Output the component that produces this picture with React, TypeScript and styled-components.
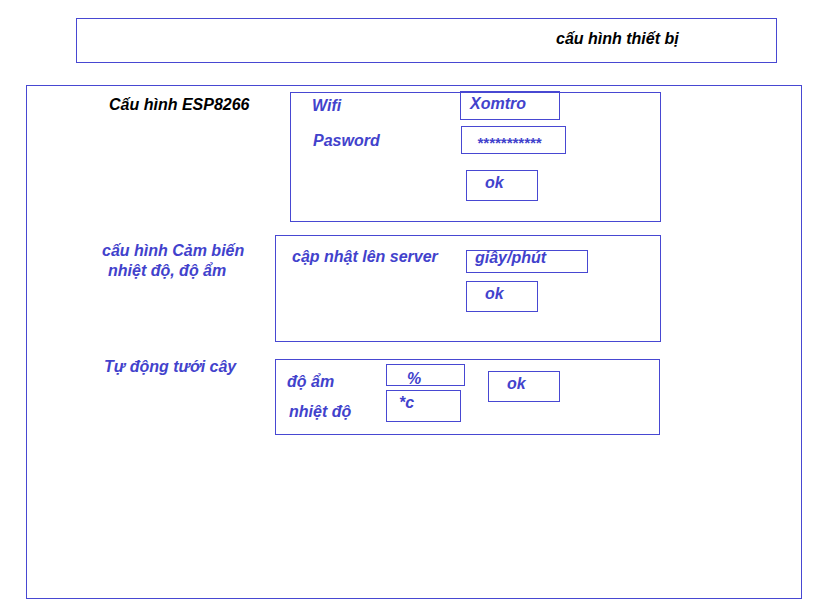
import React from 'react'
import styled, { createGlobalStyle } from 'styled-components'

const Blue = '#4242cc'
const Line = '#4848d2'

const GlobalStyle = createGlobalStyle`
  html, body {
    margin: 0;
    padding: 0;
    background: #ffffff;
  }
  body {
    font-family: "Liberation Sans", Arial, sans-serif;
    font-size: 16px;
    font-weight: bold;
    font-style: italic;
  }
`

export default function App() {
  return (
    <>
      <GlobalStyle />
      <Page>
        <Header>
          <HeaderTitle>cấu hình thiết bị</HeaderTitle>
        </Header>

        <Main>
          {/* ESP8266 */}
          <Section $mt={6}>
            <SectionLabel $w={263} $pl={82} $mt={4} $dark>
              Cấu hình ESP8266
            </SectionLabel>
            <Panel $w={371} $h={130}>
              <FieldRow $mt={-2}>
                <FieldLabel $w={169} $pl={21} $mt={6}>Wifi</FieldLabel>
                <InputBox $w={100} $h={29} $pl={9} $pt={5}>Xomtro</InputBox>
              </FieldRow>
              <FieldRow $mt={6}>
                <FieldLabel $w={170} $pl={22} $mt={6}>Pasword</FieldLabel>
                <InputBox $w={105} $h={28} $pl={15} $pt={9} $small>***********</InputBox>
              </FieldRow>
              <FieldRow $mt={16}>
                <FieldLabel $w={175} />
                <InputBox $w={72} $h={31} $pl={18} $pt={5}>ok</InputBox>
              </FieldRow>
            </Panel>
          </Section>

          {/* Cảm biến */}
          <Section $mt={13}>
            <SectionLabel $w={248} $pl={75} $mt={6} $lh={20}>
              cấu hình Cảm biến
              <Indent>nhiệt độ, độ ẩm</Indent>
            </SectionLabel>
            <Panel $w={386} $h={107}>
              <FieldRow $mt={14}>
                <FieldLabel $w={190} $pl={16} $mt={-2}>cập nhật lên server</FieldLabel>
                <InputBox $w={122} $h={23} $pl={8} $pt={0}>giây/phút</InputBox>
              </FieldRow>
              <FieldRow $mt={8}>
                <FieldLabel $w={190} />
                <InputBox $w={72} $h={31} $pl={18} $pt={5}>ok</InputBox>
              </FieldRow>
            </Panel>
          </Section>

          {/* Tưới cây */}
          <Section $mt={17}>
            <SectionLabel $w={248} $pl={77} $mt={-1}>
              Tự động tưới cây
            </SectionLabel>
            <Panel $w={385} $h={76} $row>
              <FieldColumn>
                <FieldRow $mt={4} $h={22}>
                  <FieldLabel $w={110} $pl={11} $mt={9}>độ ẩm</FieldLabel>
                  <InputBox $w={79} $h={22} $pl={20} $pt={7}>%</InputBox>
                </FieldRow>
                <FieldRow $mt={4} $h={32}>
                  <FieldLabel $w={110} $pl={13} $mt={13}>nhiệt độ</FieldLabel>
                  <InputBox $w={75} $h={32} $pl={12} $pt={5}>*c</InputBox>
                </FieldRow>
              </FieldColumn>
              <OkButton>ok</OkButton>
            </Panel>
          </Section>
        </Main>
      </Page>
    </>
  )
}

/* khung trang */
const Page = styled.div`
  width: 817px;
  height: 607px;
  padding-top: 18px;
  box-sizing: border-box;
`

/* tiêu đề */
const Header = styled.div`
  margin-left: 76px;
  width: 701px;
  height: 45px;
  border: 1px solid ${Line};
  box-sizing: border-box;
  padding: 11px 0 0 479px;
`

const HeaderTitle = styled.div`
  color: #000000;
  line-height: 18px;
`

/* nội dung chính */
const Main = styled.div`
  margin: 22px 0 0 26px;
  width: 776px;
  height: 514px;
  border: 1px solid ${Line};
  box-sizing: border-box;
  display: flex;
  flex-direction: column;
`

const Section = styled.div<{ $mt: number }>`
  display: flex;
  align-items: flex-start;
  margin-top: ${p => p.$mt}px;
`

const SectionLabel = styled.div<{ $w: number; $pl: number; $mt: number; $lh?: number; $dark?: boolean }>`
  flex: 0 0 ${p => p.$w}px;
  box-sizing: border-box;
  padding-left: ${p => p.$pl}px;
  margin-top: ${p => p.$mt}px;
  line-height: ${p => p.$lh ?? 18}px;
  color: ${p => (p.$dark ? '#000000' : Blue)};
  white-space: nowrap;
`

const Indent = styled.div`
  padding-left: 6px;
`

const Panel = styled.div<{ $w: number; $h: number; $row?: boolean }>`
  width: ${p => p.$w}px;
  height: ${p => p.$h}px;
  border: 1px solid ${Line};
  box-sizing: border-box;
  display: flex;
  flex-direction: ${p => (p.$row ? 'row' : 'column')};
  align-items: flex-start;
`

const FieldColumn = styled.div`
  width: 189px;
  display: flex;
  flex-direction: column;
`

const FieldRow = styled.div<{ $mt: number; $h?: number }>`
  display: flex;
  align-items: flex-start;
  margin-top: ${p => p.$mt}px;
  height: ${p => (p.$h ? `${p.$h}px` : 'auto')};
`

const FieldLabel = styled.div<{ $w: number; $pl?: number; $mt?: number }>`
  flex: 0 0 ${p => p.$w}px;
  box-sizing: border-box;
  padding-left: ${p => p.$pl ?? 0}px;
  margin-top: ${p => p.$mt ?? 0}px;
  line-height: 18px;
  color: ${Blue};
  white-space: nowrap;
`

const InputBox = styled.div<{ $w: number; $h: number; $pl: number; $pt: number; $small?: boolean }>`
  flex: 0 0 auto;
  width: ${p => p.$w}px;
  height: ${p => p.$h}px;
  border: 1px solid ${Line};
  box-sizing: border-box;
  padding: ${p => p.$pt}px 0 0 ${p => p.$pl}px;
  font-size: ${p => (p.$small ? 15 : 16)}px;
  line-height: 14px;
  color: ${Blue};
  white-space: nowrap;
`

const OkButton = styled.div`
  width: 72px;
  height: 31px;
  margin: 11px 0 0 23px;
  border: 1px solid ${Line};
  box-sizing: border-box;
  padding: 5px 0 0 18px;
  line-height: 14px;
  color: ${Blue};
`
